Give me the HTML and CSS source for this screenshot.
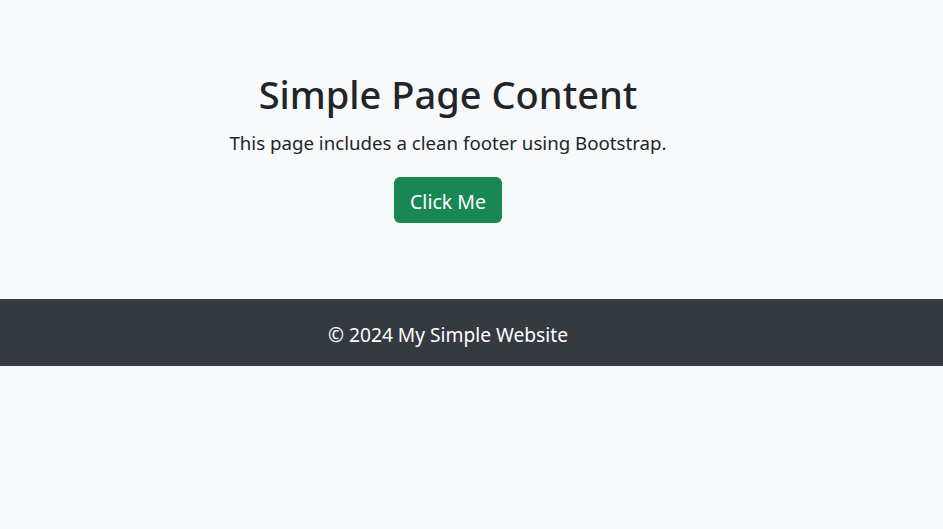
FILE: index.html
```html
<!DOCTYPE html>
<html lang="en">
<head>
<meta charset="utf-8">
<title>Simple Page</title>
<link rel="stylesheet" href="styles.css">
</head>
<body>
<main class="content">
  <h1 class="title">Simple Page Content</h1>
  <p class="lead">This page includes a clean footer using Bootstrap.</p>
  <button class="btn" type="button">Click Me</button>
</main>
<footer class="footer">
  <p class="footer-text">© 2024 My Simple Website</p>
</footer>
</body>
</html>
```
FILE: styles.css
```css
html, body {
  margin: 0;
  padding: 0;
}
body {
  background: #f8f9fa;
  color: #212529;
  font-family: "Noto Sans", "Open Sans", sans-serif;
  height: 529px;
}
.content {
  width: 896px;
  box-sizing: border-box;
  padding: 70px 0 76px;
  display: flex;
  flex-direction: column;
  align-items: center;
  text-align: center;
}
.title {
  margin: 0 0 10px;
  font-size: 38px;
  line-height: 48px;
  font-weight: 500;
}
.lead {
  margin: 0;
  font-size: 18.7px;
  line-height: 30px;
  font-weight: 400;
}
.btn {
  margin-top: 19px;
  font-family: inherit;
  font-size: 19.5px;
  line-height: 30px;
  padding: 10px 16px 6px;
  border: 0;
  border-radius: 6px;
  background: #198754;
  color: #fff;
  cursor: pointer;
}
.footer {
  background: #343a40;
  color: #fff;
  height: 67px;
  box-sizing: border-box;
  width: 100%;
}
.footer-text {
  margin: 0;
  width: 896px;
  text-align: center;
  font-size: 19.2px;
  line-height: 30px;
  padding-top: 21px;
}
```
